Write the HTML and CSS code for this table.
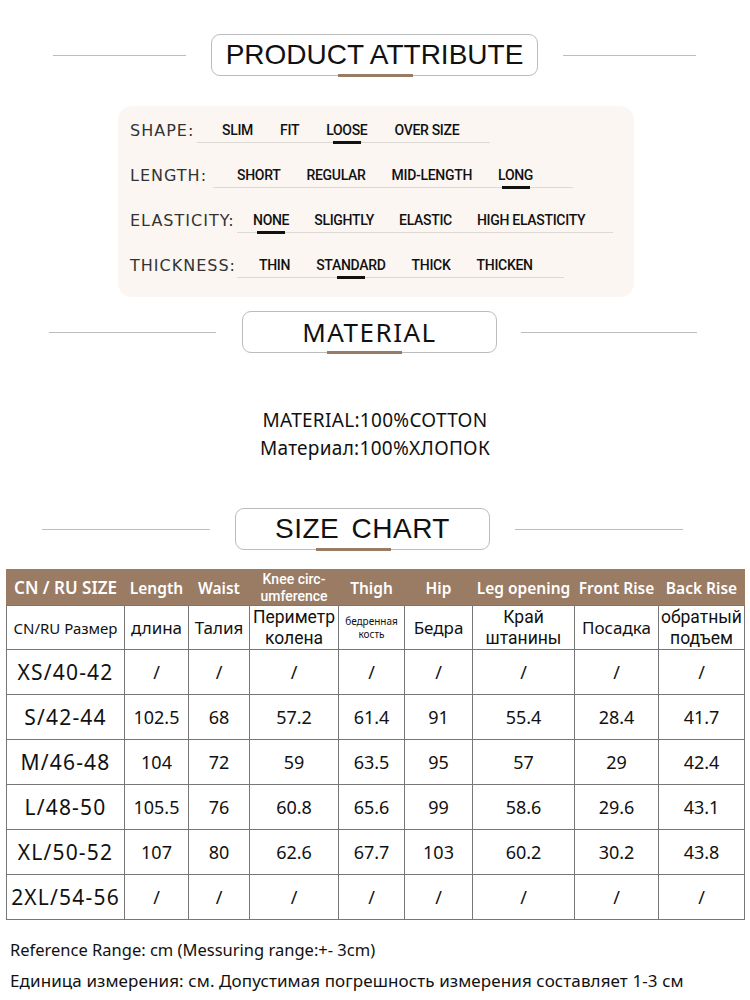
FILE: index.html
```html
<!DOCTYPE html>
<html lang="en">
<head>
<meta charset="utf-8">
<title>Product attribute</title>
<link rel="stylesheet" href="styles.css">
</head>
<body>
<div class="page">
  <div class="heading h-attr">
    <span class="line"></span>
    <div class="title">PRODUCT ATTRIBUTE</div>
    <span class="line"></span>
  </div>

  <div class="attr-box">
    <div class="attr-row row-shape">
      <span class="attr-label">SHAPE:</span>
      <div class="attr-opts">
        <span>SLIM</span><span>FIT</span><span class="sel">LOOSE</span><span>OVER SIZE</span>
      </div>
    </div>
    <div class="attr-row row-length">
      <span class="attr-label">LENGTH:</span>
      <div class="attr-opts">
        <span>SHORT</span><span>REGULAR</span><span>MID-LENGTH</span><span class="sel">LONG</span>
      </div>
    </div>
    <div class="attr-row row-elastic">
      <span class="attr-label">ELASTICITY:</span>
      <div class="attr-opts">
        <span class="sel">NONE</span><span>SLIGHTLY</span><span>ELASTIC</span><span>HIGH ELASTICITY</span>
      </div>
    </div>
    <div class="attr-row row-thick">
      <span class="attr-label">THICKNESS:</span>
      <div class="attr-opts">
        <span>THIN</span><span class="sel">STANDARD</span><span>THICK</span><span>THICKEN</span>
      </div>
    </div>
  </div>

  <div class="heading h-mat">
    <span class="line"></span>
    <div class="title">MATERIAL</div>
    <span class="line"></span>
  </div>

  <div class="material">
    <p>MATERIAL:100%COTTON</p>
    <p>Материал:100%ХЛОПОК</p>
  </div>

  <div class="heading h-size">
    <span class="line"></span>
    <div class="title">SIZE CHART</div>
    <span class="line"></span>
  </div>

  <table class="chart">
    <colgroup>
      <col style="width:118px"><col style="width:64px"><col style="width:61px"><col style="width:89px"><col style="width:66px"><col style="width:68px"><col style="width:102px"><col style="width:84px"><col style="width:86px">
    </colgroup>
    <tr class="head">
      <th class="first">CN / RU SIZE</th><th>Length</th><th>Waist</th><th class="two">Knee circ-<br>umference</th><th>Thigh</th><th>Hip</th><th>Leg opening</th><th>Front Rise</th><th>Back Rise</th>
    </tr>
    <tr class="ru">
      <td class="ru-first">CN/RU Размер</td><td>длина</td><td>Талия</td><td class="two">Периметр<br>колена</td><td class="tiny">бедренная<br>кость</td><td>Бедра</td><td class="two">Край<br>штанины</td><td>Посадка</td><td class="two">обратный<br>подъем</td>
    </tr>
    <tr class="data"><td class="size">XS/40-42</td><td>/</td><td>/</td><td>/</td><td>/</td><td>/</td><td>/</td><td>/</td><td>/</td></tr>
    <tr class="data"><td class="size">S/42-44</td><td>102.5</td><td>68</td><td>57.2</td><td>61.4</td><td>91</td><td>55.4</td><td>28.4</td><td>41.7</td></tr>
    <tr class="data"><td class="size">M/46-48</td><td>104</td><td>72</td><td>59</td><td>63.5</td><td>95</td><td>57</td><td>29</td><td>42.4</td></tr>
    <tr class="data"><td class="size">L/48-50</td><td>105.5</td><td>76</td><td>60.8</td><td>65.6</td><td>99</td><td>58.6</td><td>29.6</td><td>43.1</td></tr>
    <tr class="data"><td class="size">XL/50-52</td><td>107</td><td>80</td><td>62.6</td><td>67.7</td><td>103</td><td>60.2</td><td>30.2</td><td>43.8</td></tr>
    <tr class="data"><td class="size">2XL/54-56</td><td>/</td><td>/</td><td>/</td><td>/</td><td>/</td><td>/</td><td>/</td><td>/</td></tr>
  </table>

  <div class="notes">
    <p class="note-en">Reference Range: cm (Messuring range:+- 3cm)</p>
    <p class="note-ru">Единица измерения: см. Допустимая погрешность измерения составляет 1-3 см</p>
  </div>
</div>
</body>
</html>
```

FILE: styles.css
```css
* { box-sizing: border-box; }
body {
  margin: 0;
  background: #fff;
  color: #111;
  font-family: "Noto Sans", "DejaVu Sans", sans-serif;
}
p { margin: 0; }
.page { width: 750px; }

/* Section headings */
.heading {
  display: flex;
  align-items: center;
  height: 42px;
}
.heading .line {
  height: 1px;
  background: #bdbdbd;
}
.heading .title {
  position: relative;
  height: 42px;
  border: 1px solid #bcbcbc;
  border-radius: 9px;
  background: #fff;
  display: flex;
  align-items: center;
  justify-content: center;
  font-family: "Liberation Sans", Arial, sans-serif;
  font-size: 28px;
  color: #111;
}
.heading .title::after {
  content: "";
  position: absolute;
  left: 50%;
  bottom: -2px;
  width: 75px;
  height: 3px;
  margin-left: -37px;
  background: #9a7b64;
}
.h-attr { margin-top: 34px; padding-left: 53px; }
.h-attr .line { width: 133px; }
.h-attr .title { width: 327px; margin: 0 25px; }

.h-mat { margin-top: 14px; padding-left: 49px; }
.h-mat .line:first-child { width: 167px; margin-right: 26px; }
.h-mat .line:last-child { width: 176px; margin-left: 24px; }
.h-mat .title { width: 255px; font-family: "Noto Sans", sans-serif; font-size: 26px; letter-spacing: 1.5px; }
.h-mat .title::after { margin-left: -43px; }

.h-size { margin-top: 46px; padding-left: 42px; }
.h-size .line { width: 168px; }
.h-size .title { width: 255px; margin: 0 25px; word-spacing: 4px; letter-spacing: 0.5px; }
.h-size .title::after { margin-left: -47px; }

/* Attribute box */
.attr-box {
  margin: 30px 0 0 118px;
  width: 516px;
  height: 191px;
  padding: 12px 0 0 12px;
  border-radius: 14px;
  background: #fbf6f2;
}
.attr-row {
  display: flex;
  align-items: flex-end;
  height: 25px;
  margin-bottom: 20px;
}
.attr-label {
  line-height: 24px;
  font-family: "DejaVu Sans", sans-serif;
  font-weight: 400;
  font-size: 16px;
  letter-spacing: 1px;
  color: #333;
  white-space: nowrap;
}
.attr-opts {
  display: flex;
  height: 25px;
  line-height: 24px;
  border-bottom: 1px solid #dcd8d4;
  font-family: Roboto, "Noto Sans", sans-serif;
  font-weight: 500;
  font-size: 14px;
  letter-spacing: -0.3px;
  color: #111;
  white-space: nowrap;
}
.attr-opts span { position: relative; }
.attr-opts .sel::after {
  content: "";
  position: absolute;
  left: 50%;
  bottom: -2px;
  width: 28px;
  margin-left: -14px;
  height: 3px;
  background: #111;
}
.row-shape .attr-label { width: 67px; }
.row-shape .attr-opts { width: 293px; padding-left: 25px; gap: 27px; }
.row-length .attr-label { width: 83px; }
.row-length .attr-opts { width: 360px; padding-left: 24px; gap: 26px; }
.row-elastic .attr-label { width: 107px; }
.row-elastic .attr-opts { width: 376px; padding-left: 16px; gap: 25px; }
.row-thick .attr-label { width: 107px; }
.row-thick .attr-opts { width: 327px; padding-left: 22px; gap: 26px; }

/* Material */
.material {
  margin-top: 53px;
  text-align: center;
  font-size: 19px;
  line-height: 28px;
  letter-spacing: 0.3px;
  color: #111;
}

/* Size chart table */
.chart {
  margin: 19px 0 0 6px;
  width: 738px;
  border-collapse: collapse;
  table-layout: fixed;
}
.chart th {
  height: 36px;
  padding: 0;
  background: #9a7b64;
  color: #fff;
  font-weight: 600;
  font-size: 15.5px;
  white-space: nowrap;
  border: 1px solid #9a7b64;
  border-bottom-color: #777;
}
.chart th.first { font-size: 17px; }
.chart th.two { font-family: Roboto, "Noto Sans", sans-serif; font-weight: 500; font-size: 14px; line-height: 16.5px; }
.chart td {
  padding: 0;
  border: 1px solid #777;
  text-align: center;
  white-space: nowrap;
  color: #111;
}
.chart .ru td { height: 44px; font-size: 17px; line-height: 20px; }
.chart .ru td.two { font-family: Roboto, "Noto Sans", sans-serif; font-size: 17.5px; line-height: 20.5px; }
.chart .ru td.ru-first { font-size: 15px; }
.chart .ru td.tiny { font-size: 10px; line-height: 13px; }
.chart .data td { height: 45px; font-size: 18px; }
.chart .data td.size { font-size: 21px; letter-spacing: 1.2px; }

/* Notes */
.notes { margin: 19px 0 0 10px; }
.note-en {
  font-size: 16.5px;
  line-height: 22px;
}
.note-ru {
  margin-top: 8px;
  font-size: 17px;
  line-height: 24px;
  letter-spacing: 0.1px;
}
```
